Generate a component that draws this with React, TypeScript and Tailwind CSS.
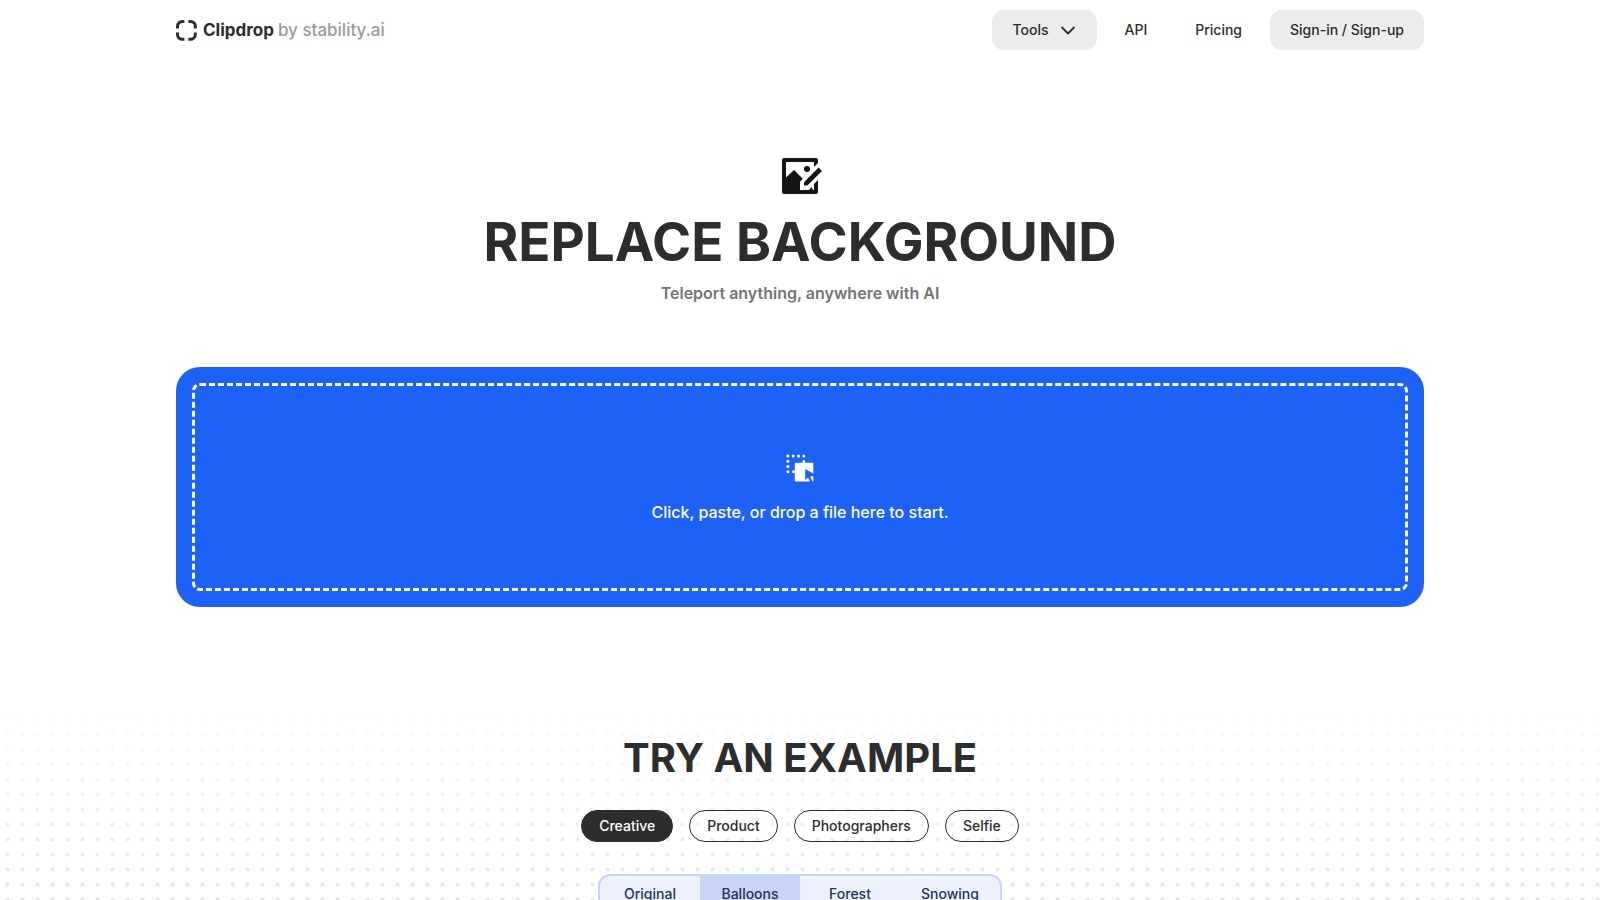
import React, { useState } from 'react';

const CATEGORIES = ['Creative', 'Product', 'Photographers', 'Selfie'];
const SCENES = ['Original', 'Balloons', 'Forest', 'Snowing'];

const LogoMark: React.FC = () => (
	<svg width="21" height="21" viewBox="0 0 21 21" fill="none" stroke="#2d2d2d" strokeWidth="3" aria-hidden="true">
		<path d="M1.5 8.4V6.3A4.8 4.8 0 0 1 6.3 1.5H8.4" />
		<path d="M12.4 1.5H14.5A4.8 4.8 0 0 1 19.3 6.3V8.4" />
		<path d="M19.3 12.4V14.5A4.8 4.8 0 0 1 14.5 19.3H12.4" />
		<path d="M8.4 19.3H6.3A4.8 4.8 0 0 1 1.5 14.5V12.4" />
	</svg>
);

const ReplaceIcon: React.FC = () => (
	<svg width="44" height="36" viewBox="-4 0 44 36" fill="#151515" aria-hidden="true">
		<path d="M2 0H34A2 2 0 0 1 36 2V5L32 9V4H4V19.5L12 12L20.8 20.8L18 23.8V32H27L29.5 29L31 32H32V26L36 22V34A2 2 0 0 1 34 36H2A2 2 0 0 1 0 34V2A2 2 0 0 1 2 0Z" />
		<circle cx="25" cy="11" r="3" />
		<path d="M22 24.2L36.6 9.6L40 13L25.4 27.6H22Z" />
	</svg>
);

const DropIcon: React.FC = () => (
	<svg width="28" height="28" viewBox="0 0 28 28" fill="#fff" aria-hidden="true">
		<circle cx="1.9" cy="1.9" r="1.5" />
		<circle cx="7.2" cy="1.9" r="1.5" />
		<circle cx="12.5" cy="1.9" r="1.5" />
		<circle cx="17.8" cy="1.9" r="1.5" />
		<circle cx="1.9" cy="7.2" r="1.5" />
		<circle cx="1.9" cy="12.5" r="1.5" />
		<circle cx="1.9" cy="17.8" r="1.5" />
		<path d="M9 16.5H7.2A1.3 1.3 0 0 0 7.2 19.1H9ZM16.5 9V7.2A1.3 1.3 0 0 1 19.1 7.2V9Z" />
		<path d="M9.6 8.8H26.5A.8 .8 0 0 1 27.3 9.6V19.5L19.2 15V26L22 23.4L24 27.6H9.6A.8 .8 0 0 1 8.8 26.8V9.6A.8 .8 0 0 1 9.6 8.8Z" />
		<path d="M24.2 22.4L27.3 22.1V26.8L26.4 27.4Z" />
	</svg>
);

const Header: React.FC = () => (
	<header className="mx-auto flex h-[60px] w-full max-w-7xl items-center justify-between px-4">
		<a href="#" className="flex items-center gap-[6px] text-[17px]">
			<LogoMark />
			<span className="font-bold">
				Clipdrop <span className="font-medium text-[#9a9a9a]">by stability.ai</span>
			</span>
		</a>
		<nav className="flex items-center gap-2 font-medium">
			<button type="button" className="flex h-10 items-center gap-[10px] rounded-xl bg-[#ececec] px-5">
				Tools
				<svg width="18" height="20" viewBox="1 0 18 20" fill="none" stroke="currentColor" strokeWidth="1.8" strokeLinecap="round" strokeLinejoin="round" aria-hidden="true">
					<path d="M4 7.5L10 13.5L16 7.5" />
				</svg>
			</button>
			<a href="#" className="flex h-10 items-center px-5">API</a>
			<a href="#" className="flex h-10 items-center px-5">Pricing</a>
			<a href="#" className="flex h-10 items-center rounded-xl bg-[#ececec] px-5">Sign-in / Sign-up</a>
		</nav>
	</header>
);

const Hero: React.FC = () => (
	<section className="mx-auto flex w-full max-w-7xl flex-col items-center px-4 pt-[98px] pb-[90px]">
		<ReplaceIcon />
		<h1 className="mt-5 text-center text-[53px] leading-14 font-bold">REPLACE BACKGROUND</h1>
		<p className="mt-[11px] text-base font-semibold text-[#747474]">Teleport anything, anywhere with AI</p>
		<button type="button" className="mt-[62px] flex h-60 w-full rounded-3xl bg-[#1d61f7] p-4 text-white">
			<span className="flex h-full w-full flex-col items-center justify-center gap-[18px] rounded-lg border-[3px] border-dashed border-white pt-1 text-base font-medium">
				<DropIcon />
				Click, paste, or drop a file here to start.
			</span>
		</button>
	</section>
);

const Examples: React.FC = () => {
	const [category, setCategory] = useState('Creative');
	const [scene, setScene] = useState('Balloons');

	return (
		<section className="relative">
			{/* Dot grid, fading in from the top */}
			<div className="absolute inset-0 bg-[radial-gradient(circle,#e6e6e6_1.5px,transparent_2.5px)] bg-size-[15px_15px] mask-[linear-gradient(to_bottom,transparent,black_200px)]" />
			<div className="relative flex flex-col items-center px-4 pt-[37px]">
				<h2 className="text-[40px] leading-12 font-bold">TRY AN EXAMPLE</h2>
				<div className="mt-7 flex flex-wrap justify-center gap-4">
					{CATEGORIES.map((name) => (
						<button
							key={name}
							type="button"
							onClick={() => setCategory(name)}
							className={`h-8 rounded-full border border-[#2d2d2d] px-[17px] font-medium ${category === name ? 'bg-[#2d2d2d] text-white' : ''}`}
						>
							{name}
						</button>
					))}
				</div>
				<div className="mt-8 flex overflow-hidden rounded-xl border-2 border-[#c8d6f5] bg-[#ecf1fc] font-medium text-[#24355f]">
					{SCENES.map((name) => (
						<button
							key={name}
							type="button"
							onClick={() => setScene(name)}
							className={`h-9 w-25 ${scene === name ? 'bg-[#c8d6f5]' : ''}`}
						>
							{name}
						</button>
					))}
				</div>
			</div>
		</section>
	);
};

const App: React.FC = () => (
	<div className="min-h-screen bg-white font-[Inter,sans-serif] text-sm text-[#2d2d2d]">
		<Header />
		<main>
			<Hero />
			<Examples />
		</main>
	</div>
);

export default App;
